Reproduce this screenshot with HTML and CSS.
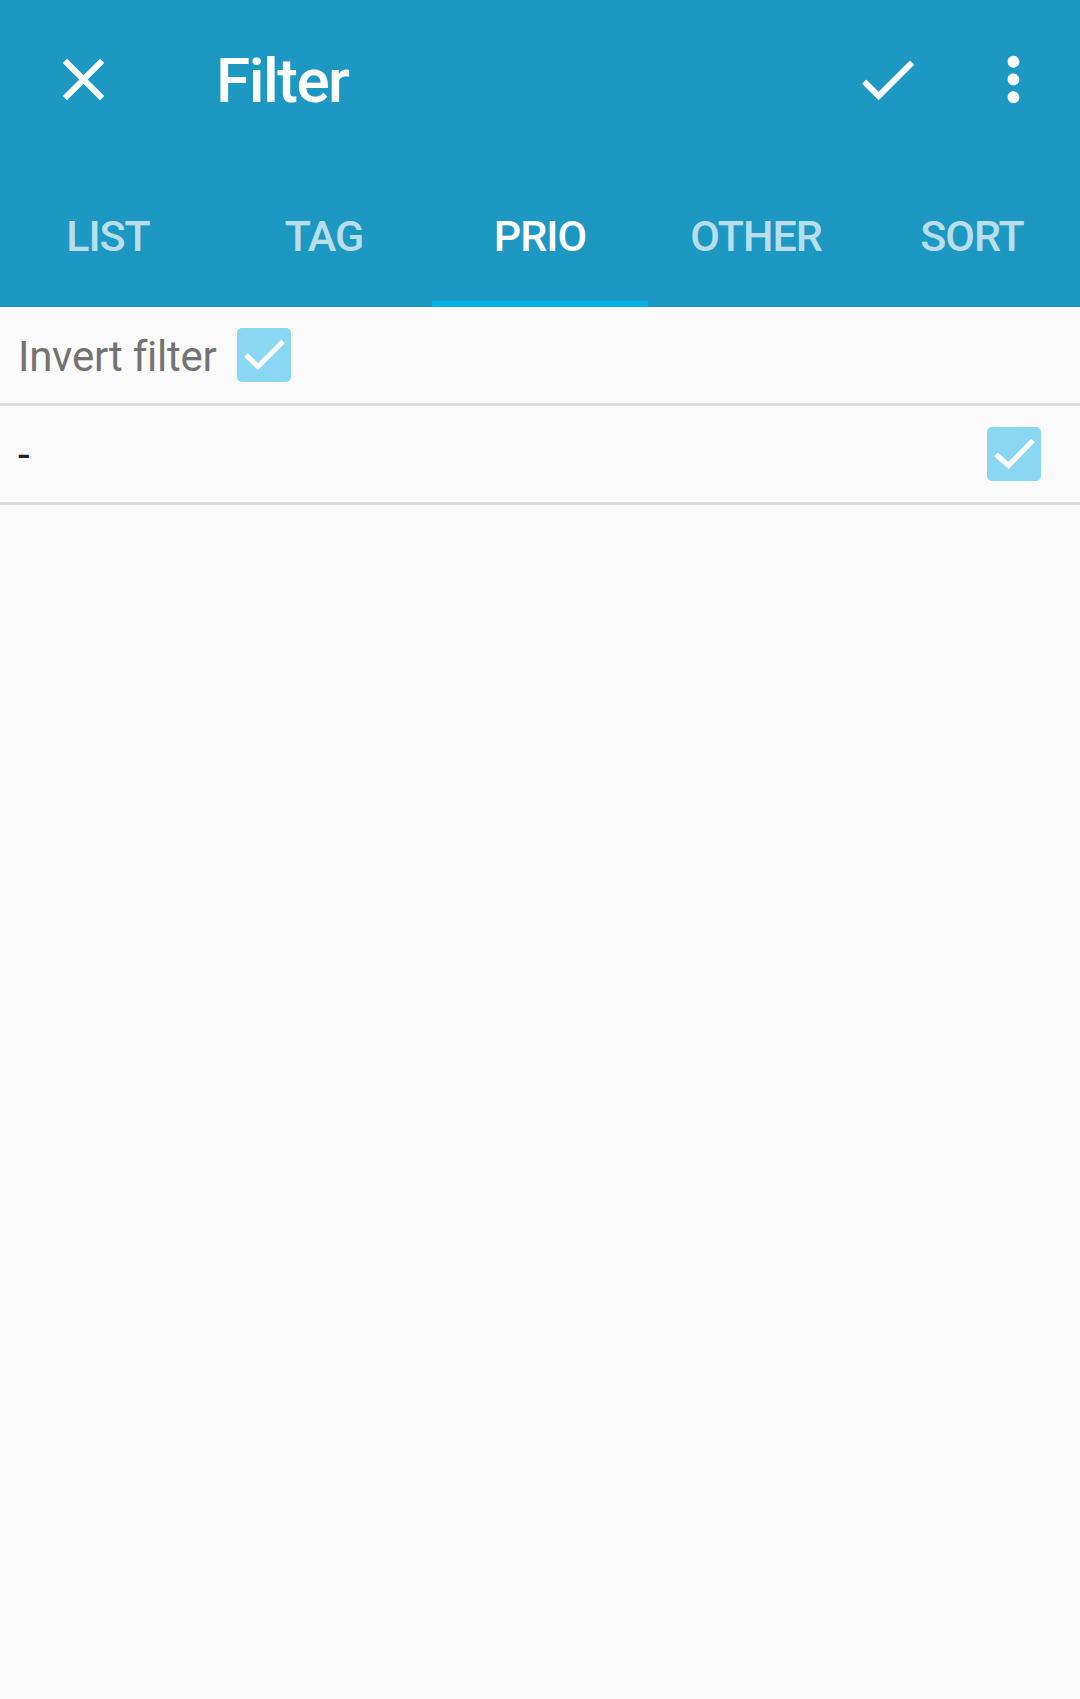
FILE: index.html
```html
<!DOCTYPE html>
<html lang="en">
<head>
<meta charset="utf-8">
<title>Filter</title>
<link rel="stylesheet" href="styles.css">
</head>
<body>
<header class="appbar">
  <div class="toolbar">
    <svg class="icon icon-close" viewBox="0 0 24 24"><path d="M19 6.41L17.59 5 12 10.59 6.41 5 5 6.41 10.59 12 5 17.59 6.41 19 12 13.41 17.59 19 19 17.59 13.41 12z"/></svg>
    <h1 class="title">Filter</h1>
    <div class="spacer"></div>
    <svg class="icon icon-check" viewBox="0 0 24 24"><path d="M9 16.17L4.83 12l-1.42 1.41L9 19 21 7l-1.41-1.41z"/></svg>
    <svg class="icon icon-more" viewBox="0 0 24 24"><path d="M12 8c1.1 0 2-.9 2-2s-.9-2-2-2-2 .9-2 2 .9 2 2 2zm0 2c-1.1 0-2 .9-2 2s.9 2 2 2 2-.9 2-2-.9-2-2-2zm0 6c-1.1 0-2 .9-2 2s.9 2 2 2 2-.9 2-2-.9-2-2-2z"/></svg>
  </div>
  <nav class="tabs">
    <div class="tab">LIST</div>
    <div class="tab">TAG</div>
    <div class="tab active">PRIO</div>
    <div class="tab">OTHER</div>
    <div class="tab">SORT</div>
  </nav>
</header>
<main class="content">
  <div class="row row-invert">
    <span class="label">Invert filter</span>
    <span class="checkbox"><svg viewBox="0 0 54 54"><polyline points="9,27 21,38.5 46,13.5"/></svg></span>
  </div>
  <div class="row row-item">
    <span class="item">-</span>
    <span class="checkbox"><svg viewBox="0 0 54 54"><polyline points="9,27.5 21.5,38.5 46,13.5"/></svg></span>
  </div>
</main>
</body>
</html>
```
FILE: styles.css
```css
html, body {
  margin: 0;
  padding: 0;
}
body {
  width: 1080px;
  min-height: 1699px;
  background: #fafafa;
  font-family: Roboto, "Noto Sans", sans-serif;
}
.appbar {
  background: #1c98c3;
  height: 307px;
  display: flex;
  flex-direction: column;
}
.toolbar {
  height: 158px;
  display: flex;
  align-items: flex-start;
  padding: 0 31px 0 48px;
}
.icon {
  width: 71px;
  height: 71px;
  fill: #ffffff;
  margin-top: 44px;
  flex: none;
}
.title {
  margin: 50px 0 0 97px;
  font-size: 62px;
  line-height: 62px;
  font-weight: 500;
  letter-spacing: -1.5px;
  color: #ffffff;
}
.spacer {
  flex: 1;
}
.icon-check {
  margin-right: 55px;
}
.tabs {
  flex: 1;
  display: flex;
}
.tab {
  position: relative;
  flex: 1;
  display: flex;
  justify-content: center;
  padding-top: 57px;
  font-size: 43px;
  line-height: 43px;
  font-weight: 500;
  letter-spacing: -1px;
  color: rgba(255, 255, 255, 0.7);
}
.tab.active {
  color: #ffffff;
}
.tab.active::after {
  content: "";
  position: absolute;
  left: 0;
  right: 0;
  bottom: 0;
  height: 6px;
  background: #03b1ec;
}
.content {
  display: flex;
  flex-direction: column;
}
.row {
  height: 96px;
  display: flex;
  align-items: center;
  border-bottom: 3px solid #dbdbdb;
  padding-left: 18px;
}
.label {
  font-size: 42px;
  line-height: 42px;
  letter-spacing: -0.25px;
  color: #737373;
  margin-top: 3px;
}
.row-invert .checkbox {
  margin-left: 21px;
}
.item {
  flex: 1;
  font-size: 42px;
  line-height: 42px;
  color: #212121;
  margin-top: 1px;
}
.row-item .checkbox {
  margin-right: 39px;
}
.checkbox {
  width: 54px;
  height: 54px;
  border-radius: 5px;
  background: #89d7f2;
  display: flex;
  flex: none;
}
.checkbox svg {
  width: 54px;
  height: 54px;
}
.checkbox polyline {
  fill: none;
  stroke: #ffffff;
  stroke-width: 5;
}
```
